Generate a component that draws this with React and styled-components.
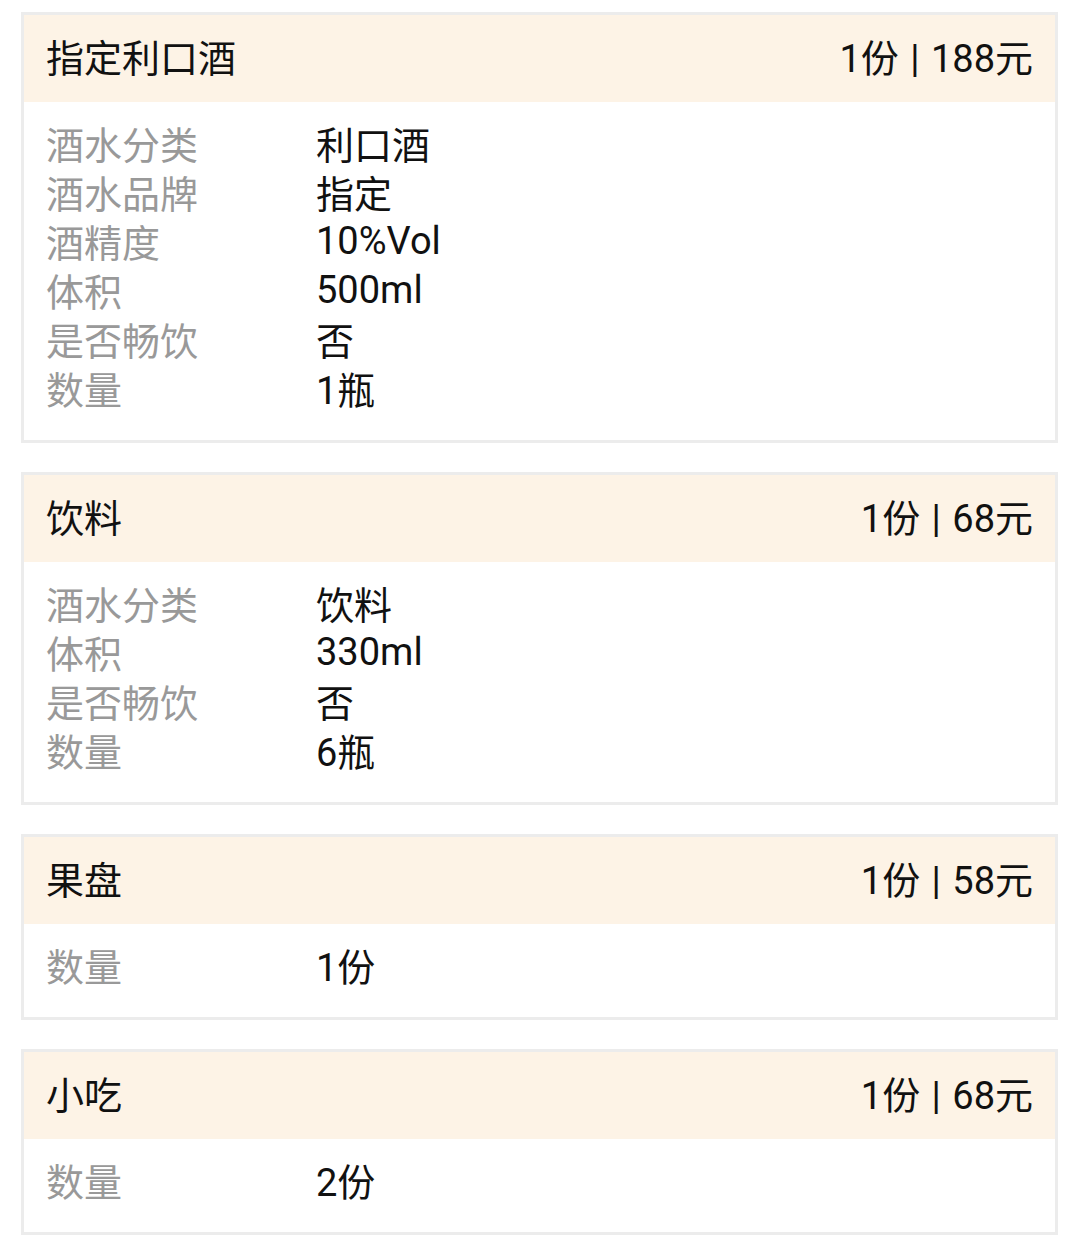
import styled, { createGlobalStyle } from "styled-components"

const GlobalStyle = createGlobalStyle`
  html, body {
    margin: 0;
    padding: 0;
    background: #ffffff;
  }
  body {
    font-family: Roboto, "Noto Sans CJK SC", sans-serif;
  }
`

const items = [
  {
    title: "指定利口酒",
    price: "1份 | 188元",
    rows: [
      ["酒水分类", "利口酒"],
      ["酒水品牌", "指定"],
      ["酒精度", "10%Vol"],
      ["体积", "500ml"],
      ["是否畅饮", "否"],
      ["数量", "1瓶"],
    ],
  },
  {
    title: "饮料",
    price: "1份 | 68元",
    rows: [
      ["酒水分类", "饮料"],
      ["体积", "330ml"],
      ["是否畅饮", "否"],
      ["数量", "6瓶"],
    ],
  },
  {
    title: "果盘",
    price: "1份 | 58元",
    rows: [["数量", "1份"]],
  },
  {
    title: "小吃",
    price: "1份 | 68元",
    rows: [["数量", "2份"]],
  },
]

export default function App() {
  return (
    <Page>
      <GlobalStyle />
      {items.map((item) => (
        <Card key={item.title}>
          <Header>
            <Title>{item.title}</Title>
            <Price>{item.price}</Price>
          </Header>
          <Body>
            {item.rows.map(([label, value]) => (
              <Row key={label}>
                <Label>{label}</Label>
                <Value>{value}</Value>
              </Row>
            ))}
          </Body>
        </Card>
      ))}
    </Page>
  )
}

const Page = styled.div`
  padding: 12px 22px 0 21px;
  display: flex;
  flex-direction: column;
  gap: 29px;
`

const Card = styled.div`
  border: 3px solid #ececec;
  background: #fff;
`

const Header = styled.div`
  box-sizing: border-box;
  height: 87px;
  background: #fdf3e6;
  display: flex;
  align-items: center;
  justify-content: space-between;
  padding: 0 22px 7px;
  color: #111;
  font-size: 38px;
`

const Title = styled.span``

const Price = styled.span`
  word-spacing: 2px;
`

const Body = styled.div`
  padding: 16px 22px 28px;
`

const Row = styled.div`
  display: flex;
  height: 49px;
  align-items: center;
  font-size: 38px;
`

const Label = styled.span`
  width: 270px;
  color: #999;
`

const Value = styled.span`
  color: #111;
`
